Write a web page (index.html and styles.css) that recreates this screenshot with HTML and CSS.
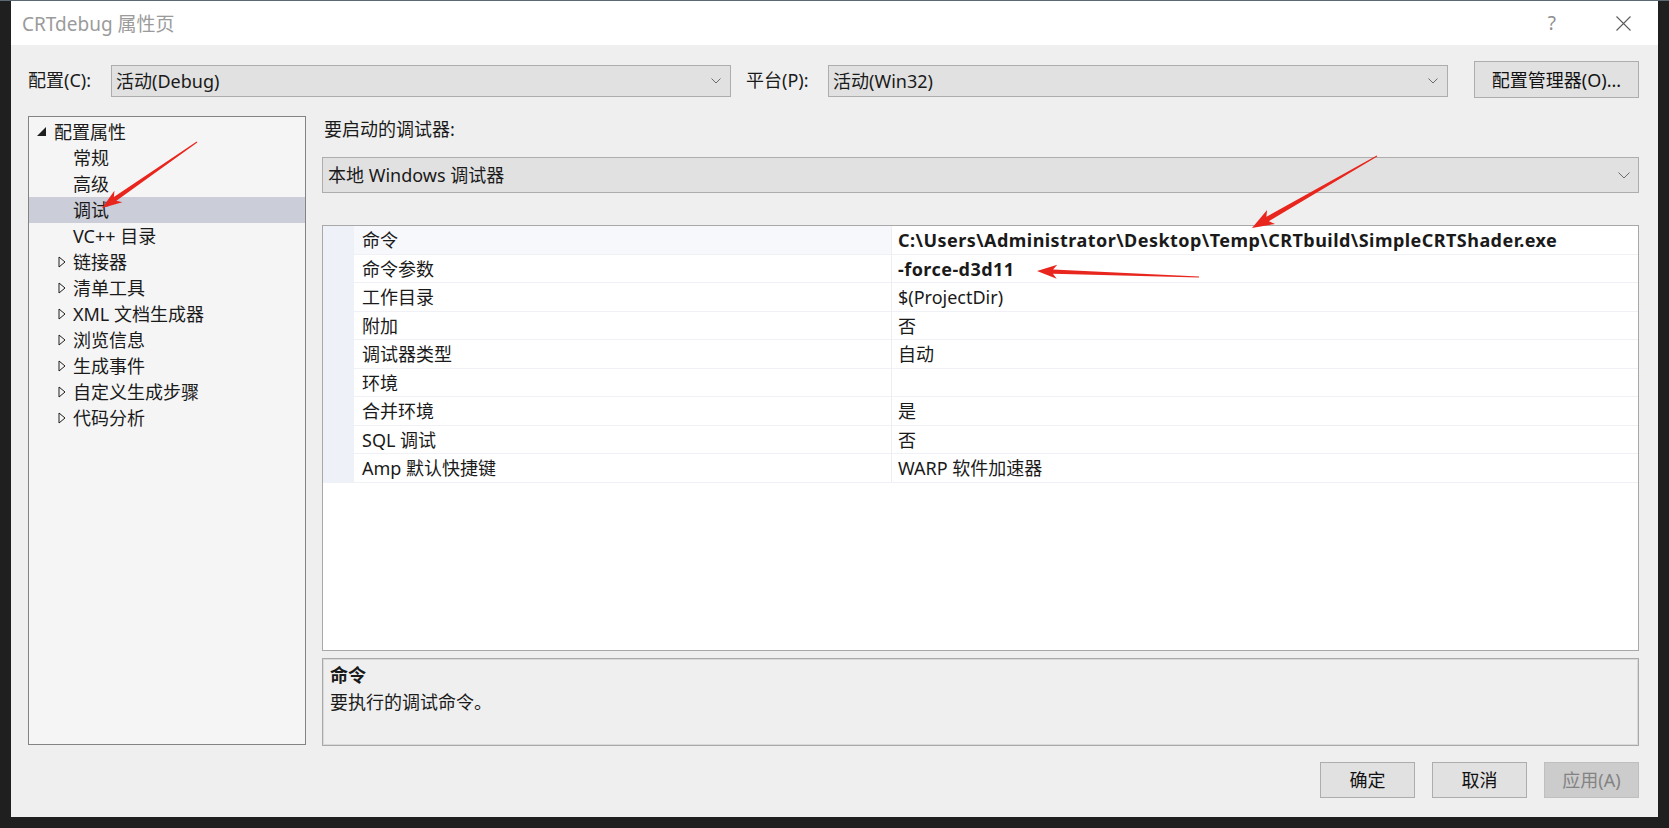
FILE: index.html
```html
<!DOCTYPE html>
<html lang="zh-CN">
<head>
<meta charset="utf-8">
<title>CRTdebug 属性页</title>
<link rel="stylesheet" href="styles.css">
</head>
<body>
<div class="desk">
  <div class="topline"></div>
  <div class="dialog">
    <div class="titlebar">
      <span class="title">CRTdebug 属性页</span>
      <span class="help">?</span>
      <svg class="close" width="15" height="15" viewBox="0 0 15 15"><path d="M0.5 0.5 L14.5 14.5 M14.5 0.5 L0.5 14.5" stroke="#5c5c5c" stroke-width="1.1" fill="none"/></svg>
    </div>
    <div class="content">
      <div class="cfgrow">
        <span class="lbl lbl-cfg">配置(C):</span>
        <div class="combo combo-sm"><span class="combo-text">活动(Debug)</span><svg class="chev" width="10" height="6" viewBox="0 0 10 6"><path d="M0.5 0.5 L5 5 L9.5 0.5" stroke="#6a6a6a" fill="none"/></svg></div>
        <span class="lbl lbl-plat">平台(P):</span>
        <div class="combo combo-sm"><span class="combo-text">活动(Win32)</span><svg class="chev" width="10" height="6" viewBox="0 0 10 6"><path d="M0.5 0.5 L5 5 L9.5 0.5" stroke="#6a6a6a" fill="none"/></svg></div>
        <button class="btn btn-mgr">配置管理器(O)...</button>
      </div>
      <div class="main">
        <div class="tree">
          <div class="node root"><svg class="tri" width="9" height="9" viewBox="0 0 9 9"><polygon points="9,0 9,9 0,9" fill="#1e1e1e"/></svg><span>配置属性</span></div>
          <div class="node leaf">常规</div>
          <div class="node leaf">高级</div>
          <div class="node leaf selected">调试</div>
          <div class="node leaf">VC++ 目录</div>
          <div class="node group"><svg class="tri2" width="8" height="12" viewBox="0 0 8 12"><polygon points="1,1 7,6 1,11" fill="none" stroke="#1e1e1e"/></svg><span>链接器</span></div>
          <div class="node group"><svg class="tri2" width="8" height="12" viewBox="0 0 8 12"><polygon points="1,1 7,6 1,11" fill="none" stroke="#1e1e1e"/></svg><span>清单工具</span></div>
          <div class="node group"><svg class="tri2" width="8" height="12" viewBox="0 0 8 12"><polygon points="1,1 7,6 1,11" fill="none" stroke="#1e1e1e"/></svg><span>XML 文档生成器</span></div>
          <div class="node group"><svg class="tri2" width="8" height="12" viewBox="0 0 8 12"><polygon points="1,1 7,6 1,11" fill="none" stroke="#1e1e1e"/></svg><span>浏览信息</span></div>
          <div class="node group"><svg class="tri2" width="8" height="12" viewBox="0 0 8 12"><polygon points="1,1 7,6 1,11" fill="none" stroke="#1e1e1e"/></svg><span>生成事件</span></div>
          <div class="node group"><svg class="tri2" width="8" height="12" viewBox="0 0 8 12"><polygon points="1,1 7,6 1,11" fill="none" stroke="#1e1e1e"/></svg><span>自定义生成步骤</span></div>
          <div class="node group"><svg class="tri2" width="8" height="12" viewBox="0 0 8 12"><polygon points="1,1 7,6 1,11" fill="none" stroke="#1e1e1e"/></svg><span>代码分析</span></div>
        </div>
        <div class="right">
          <div class="sec-label">要启动的调试器:</div>
          <div class="combo combo-big"><span class="combo-text">本地 Windows 调试器</span><svg class="chev" width="12" height="7" viewBox="0 0 12 7"><path d="M0.5 0.5 L6 6 L11.5 0.5" stroke="#6a6a6a" fill="none"/></svg></div>
          <div class="grid">
            <div class="row first"><div class="gut"></div><div class="name">命令</div><div class="val bold">C:\Users\Administrator\Desktop\Temp\CRTbuild\SimpleCRTShader.exe</div></div>
            <div class="row"><div class="gut"></div><div class="name">命令参数</div><div class="val bold">-force-d3d11</div></div>
            <div class="row"><div class="gut"></div><div class="name">工作目录</div><div class="val">$(ProjectDir)</div></div>
            <div class="row"><div class="gut"></div><div class="name">附加</div><div class="val">否</div></div>
            <div class="row"><div class="gut"></div><div class="name">调试器类型</div><div class="val">自动</div></div>
            <div class="row"><div class="gut"></div><div class="name">环境</div><div class="val"></div></div>
            <div class="row"><div class="gut"></div><div class="name">合并环境</div><div class="val">是</div></div>
            <div class="row"><div class="gut"></div><div class="name">SQL 调试</div><div class="val">否</div></div>
            <div class="row"><div class="gut"></div><div class="name">Amp 默认快捷键</div><div class="val">WARP 软件加速器</div></div>
          </div>
          <div class="desc">
            <div class="desc-title">命令</div>
            <div class="desc-text">要执行的调试命令。</div>
          </div>
        </div>
      </div>
      <div class="footer">
        <button class="btn btn-foot">确定</button>
        <button class="btn btn-foot">取消</button>
        <button class="btn btn-foot disabled">应用(A)</button>
      </div>
    </div>
  </div>
  <svg class="arrows" width="1669" height="828" viewBox="0 0 1669 828">
    <polygon fill="#e8261e" points="197.29,142.41 116.39,200.68 122.41,202.34 102,208 114.43,190.84 113.88,197.06 196.71,141.59"/>
    <polygon fill="#e8261e" points="1377.25,156.43 1268.85,221.17 1275.05,223.95 1252,228 1267.07,210.09 1266.35,216.83 1376.75,155.57"/>
    <polygon fill="#e8261e" points="1198.98,277.5 1052.91,273.79 1056.73,278.74 1037,271 1057.25,264.74 1053.07,269.39 1199.02,276.5"/>
  </svg>
</div>
</body>
</html>
```
FILE: styles.css
```css
* { box-sizing: border-box; }
html, body { margin: 0; padding: 0; }
body {
  background: #1f1f1f;
  font-family: "Noto Sans", "Noto Sans CJK SC", sans-serif;
  font-size: 18px;
  color: #1a1a1a;
}
.desk {
  position: relative;
  width: 1669px;
  height: 828px;
  overflow: hidden;
}
.topline {
  height: 1px;
  background: #5a6974;
}
.dialog {
  margin-left: 11px;
  width: 1647px;
  height: 816px;
  background: #efefef;
  display: flex;
  flex-direction: column;
}
.titlebar {
  height: 44px;
  background: #ffffff;
  display: flex;
  align-items: center;
  padding-left: 11px;
}
.title {
  font-size: 19px;
  color: #9b9b9b;
  flex: 1;
}
.help {
  font-size: 19px;
  color: #8e8e8e;
  margin-right: 60px;
}
.close { margin-right: 27px; }

.content {
  flex: 1;
  padding: 16px 19px 0 17px;
  display: flex;
  flex-direction: column;
}
.cfgrow {
  height: 37px;
  display: flex;
  align-items: center;
}
.lbl { line-height: 24px; }
.lbl-cfg { width: 83px; }
.lbl-plat { width: 82px; margin-left: 15px; }
.combo {
  background: #e1e1e1;
  border: 1px solid #adadad;
  display: flex;
  align-items: center;
  justify-content: space-between;
}
.combo-sm {
  width: 620px;
  height: 32px;
  margin-top: 3px;
  padding: 0 9px 0 4px;
}
.combo-big {
  height: 36px;
  margin-top: 9px;
  padding: 0 8px 0 5px;
}
.combo-text { line-height: 24px; }
.chev { display: block; }
.btn {
  font-family: inherit;
  font-size: 18px;
  color: #111;
  background: #e1e1e1;
  border: 1px solid #adadad;
  padding: 0;
  line-height: 24px;
}
.btn-mgr {
  margin-left: 26px;
  width: 165px;
  height: 37px;
}

.main {
  margin-top: 18px;
  height: 630px;
  display: flex;
  gap: 16px;
}
.tree {
  width: 278px;
  height: 629px;
  background: #f5f5f5;
  border: 1px solid #838383;
  padding: 2px 0 0 0;
}
.node {
  height: 26px;
  line-height: 26px;
  display: flex;
  align-items: center;
  white-space: nowrap;
}
.node.root { padding-left: 8px; }
.node.root .tri { margin-right: 8px; margin-top: -2px; }
.node.leaf { padding-left: 44px; }
.node.group { padding-left: 29px; }
.node.group .tri2 { margin-right: 7px; }
.node.selected { background: #cbcdd9; }

.right {
  flex: 1;
  display: flex;
  flex-direction: column;
}
.sec-label {
  height: 32px;
  line-height: 26px;
  padding-left: 2px;
}
.grid {
  margin-top: 32px;
  height: 426px;
  background: #ffffff;
  border: 1px solid #a8a8a8;
}
.row {
  display: flex;
  height: 28.5px;
}
.gut {
  width: 31px;
  background: #eef2f8;
}
.name {
  width: 538px;
  padding-left: 8px;
  padding-top: 2px;
  line-height: 25.5px;
  border-bottom: 1px solid #eff1f6;
  border-right: 1px solid #eeeeee;
}
.val {
  flex: 1;
  padding-left: 6px;
  padding-top: 2px;
  line-height: 25.5px;
  border-bottom: 1px solid #eff1f6;
  white-space: nowrap;
}
.row.first .name { background: #f7f8fb; }
.bold { font-weight: 700; letter-spacing: 0.45px; }

.desc {
  margin-top: 7px;
  height: 88px;
  background: #efefef;
  border: 1px solid #a9a9a9;
  box-shadow: inset 0 0 0 1px #d9d9d9;
  padding: 3px 0 0 7px;
}
.desc-title { font-weight: 700; line-height: 27px; }
.desc-text { line-height: 27px; }

.footer {
  margin-top: 16px;
  display: flex;
  justify-content: flex-end;
  gap: 17px;
}
.btn-foot {
  width: 95px;
  height: 36px;
}
.btn-foot.disabled {
  background: #cccccc;
  border-color: #bfbfbf;
  color: #838383;
}
.arrows {
  position: absolute;
  left: 0;
  top: 0;
  pointer-events: none;
}
```
